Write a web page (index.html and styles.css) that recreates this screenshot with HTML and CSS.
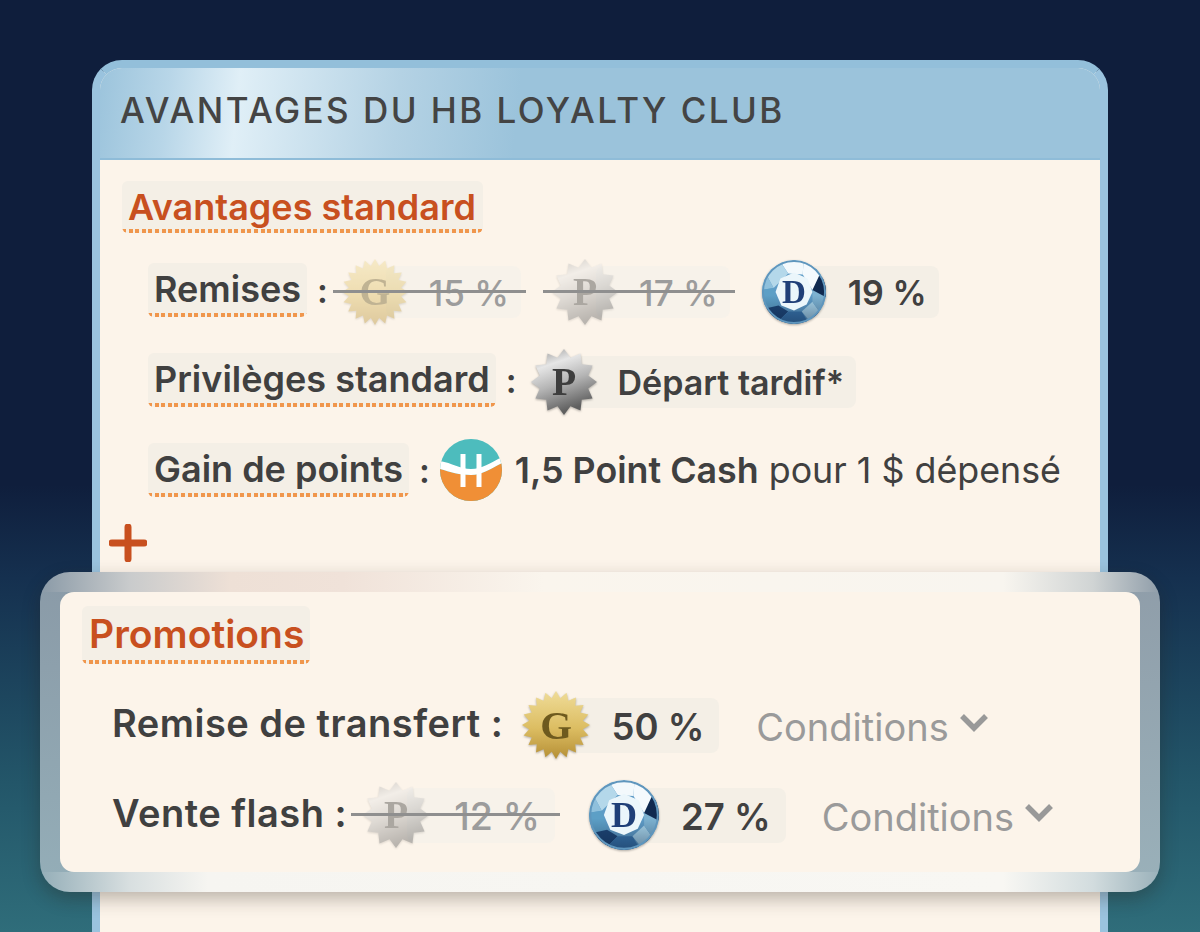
FILE: index.html
```
<!DOCTYPE html>
<html lang="fr">
<head>
<meta charset="utf-8">
<title>Avantages du HB Loyalty Club</title>
<link rel="stylesheet" href="styles.css">
</head>
<body>
<svg class="defs" width="0" height="0" aria-hidden="true">
  <defs>
    <linearGradient id="gold" x1="0" y1="0" x2="0" y2="1"><stop offset="0" stop-color="#efdc98"/><stop offset=".55" stop-color="#dcbd62"/><stop offset="1" stop-color="#b58f35"/></linearGradient>
    <linearGradient id="silver" x1="0" y1="0" x2="0.35" y2="1"><stop offset="0" stop-color="#8d8d8d"/><stop offset=".3" stop-color="#e6e6e6"/><stop offset=".6" stop-color="#b5b5b5"/><stop offset="1" stop-color="#5f5f5f"/></linearGradient>
    <linearGradient id="gem-shade" x1="0" y1="0" x2="0" y2="1"><stop offset=".55" stop-color="#0a1e3c" stop-opacity="0"/><stop offset="1" stop-color="#0a1e3c" stop-opacity=".45"/></linearGradient>
    <clipPath id="gem-clip"><circle cx="34" cy="34" r="33"/></clipPath>
    <clipPath id="h-clip"><circle cx="31" cy="31" r="31"/></clipPath>
    <polygon id="seal-gold" fill="url(#gold)" points="50,0 39.5,6.3 47.6,15.5 35.6,18.2 40.5,29.4 28.3,28.3 29.4,40.5 18.2,35.6 15.5,47.6 6.3,39.5 0,50 -6.3,39.5 -15.5,47.6 -18.2,35.6 -29.4,40.5 -28.3,28.3 -40.5,29.4 -35.6,18.2 -47.6,15.5 -39.5,6.3 -50,0 -39.5,-6.3 -47.6,-15.5 -35.6,-18.2 -40.5,-29.4 -28.3,-28.3 -29.4,-40.5 -18.2,-35.6 -15.5,-47.6 -6.3,-39.5 0,-50 6.3,-39.5 15.5,-47.6 18.2,-35.6 29.4,-40.5 28.3,-28.3 40.5,-29.4 35.6,-18.2 47.6,-15.5 39.5,-6.3"/>
    <polygon id="seal-silver" fill="url(#silver)" points="50,0 36.7,9.8 43.3,25 26.9,26.9 25,43.3 9.8,36.7 0,50 -9.8,36.7 -25,43.3 -26.9,26.9 -43.3,25 -36.7,9.8 -50,0 -36.7,-9.8 -43.3,-25 -26.9,-26.9 -25,-43.3 -9.8,-36.7 0,-50 9.8,-36.7 25,-43.3 26.9,-26.9 43.3,-25 36.7,-9.8"/>
    <g id="gem" clip-path="url(#gem-clip)">
      <circle cx="34" cy="34" r="33" fill="#5f9cc7"/>
      <polygon points="26,0 44,0 43,16 28,15 22,6" fill="#f3f9fc"/>
      <polygon points="44,0 68,22 53,32 43,16" fill="#f5fafd"/>
      <polygon points="0,6 22,6 28,15 13,30" fill="#b4d8ea"/>
      <polygon points="22,6 26,0 0,0 0,6" fill="#a6cfe4"/>
      <polygon points="0,32 0,6 13,30" fill="#8fc0dc"/>
      <polygon points="0,32 13,30 18,48 0,52" fill="#5d9fc6"/>
      <polygon points="0,52 18,48 28,54 14,68 0,68" fill="#1d4474"/>
      <polygon points="28,54 42,54 50,68 14,68" fill="#3a76ad"/>
      <polygon points="42,54 53,44 60,54 50,64" fill="#a9d5ea"/>
      <polygon points="50,68 50,64 60,54 68,58 68,68" fill="#1f4a7d"/>
      <polygon points="53,32 68,34 68,58 60,54 53,44" fill="#7db2d1"/>
      <polygon points="60,17 68,22 68,40 53,32" fill="#10294f"/>
      <circle cx="34" cy="34" r="33" fill="url(#gem-shade)"/>
      <circle cx="34" cy="34" r="32" fill="none" stroke="#5f96bd" stroke-width="2"/>
      <polygon points="34,14 48,20 53,34 47,47 34,53 21,48 15,34 20,20" fill="#ebf6fb"/>
    </g>
  </defs>
</svg>

<main class="card">
  <h1 class="card-head">AVANTAGES DU HB LOYALTY CLUB</h1>

  <section class="standard">
    <h2 class="tag tag-title">Avantages standard</h2>

    <div class="row row-std">
      <span class="tag tag-label">Remises</span><span class="colon">:</span>
      <div class="offer off">
        <svg class="seal" viewBox="-50 -50 100 100"><use href="#seal-gold"/><text class="seal-letter letter-gold" y="20">G</text></svg>
        <span class="value">15 %</span>
      </div>
      <div class="offer off">
        <svg class="seal" viewBox="-50 -50 100 100"><use href="#seal-silver"/><text class="seal-letter letter-silver" y="20">P</text></svg>
        <span class="value">17 %</span>
      </div>
      <div class="offer">
        <svg class="seal" viewBox="0 0 68 68"><use href="#gem"/><text class="gem-letter" x="34" y="45">D</text></svg>
        <span class="value">19 %</span>
      </div>
    </div>

    <div class="row row-std">
      <span class="tag tag-label">Privilèges standard</span><span class="colon">:</span>
      <div class="offer">
        <svg class="seal" viewBox="-50 -50 100 100"><use href="#seal-silver"/><text class="seal-letter letter-silver" y="20">P</text></svg>
        <span class="value">Départ tardif*</span>
      </div>
    </div>

    <div class="row row-std">
      <span class="tag tag-label">Gain de points</span><span class="colon colon-tight">:</span>
      <svg class="hlogo" viewBox="0 0 62 62">
        <g clip-path="url(#h-clip)">
          <rect width="62" height="62" fill="#4dbcbd"/>
          <path d="M0 30C10 33 20 36 31 36S50 30 62 24V62H0z" fill="#f08f36"/>
          <path d="M0 22C12 24 20 30 31 30S50 24 62 18V24C50 30 42 36 31 36S10 33 0 30z" fill="#fff"/>
          <path d="M23 15v33M39 15v33" fill="none" stroke="#fff" stroke-width="5"/>
        </g>
      </svg>
      <span class="points"><b>1,5 Point Cash</b> pour 1 $ dépensé</span>
    </div>

    <svg class="plus" viewBox="0 0 38 38"><path d="M19 3v32M3 19h32" stroke="#c8501f" stroke-width="7" stroke-linecap="round"/></svg>
  </section>

  <section class="promo">
    <div class="promo-inner">
      <h2 class="tag tag-title tag-promo">Promotions</h2>

      <div class="row row-promo">
        <span class="promo-label">Remise de transfert :</span>
        <div class="offer offer-g">
          <svg class="seal" viewBox="-50 -50 100 100"><use href="#seal-gold"/><text class="seal-letter letter-gold" y="20">G</text></svg>
          <span class="value">50 %</span>
        </div>
        <span class="cond">Conditions<svg class="chev" viewBox="0 0 30 20"><path d="M3 4l12 12L27 4" fill="none" stroke="#999" stroke-width="5.5"/></svg></span>
      </div>

      <div class="row row-promo">
        <span class="promo-label">Vente flash :</span>
        <div class="offer off offer-flash">
          <svg class="seal" viewBox="-50 -50 100 100"><use href="#seal-silver"/><text class="seal-letter letter-silver" y="20">P</text></svg>
          <span class="value">12 %</span>
        </div>
        <div class="offer offer-gem">
          <svg class="seal seal-big" viewBox="0 0 68 68"><use href="#gem"/><text class="gem-letter" x="34" y="45">D</text></svg>
          <span class="value">27 %</span>
        </div>
        <span class="cond">Conditions<svg class="chev" viewBox="0 0 30 20"><path d="M3 4l12 12L27 4" fill="none" stroke="#999" stroke-width="5.5"/></svg></span>
      </div>
    </div>
  </section>
</main>
</body>
</html>
```

FILE: styles.css
```
* { box-sizing: border-box; }

html, body { margin: 0; height: 932px; overflow: hidden; }

body {
  padding: 60px 92px 0;
  font-family: Inter, "Noto Sans", "Liberation Sans", sans-serif;
  color: #404040;
  background: linear-gradient(#0f1e3c 0, #0f1e3c 52%, #15304f 62%, #235669 84%, #2f6d7a 100%);
}

.defs { position: absolute; }

.card {
  height: 872px;
  border: 8px solid #9ac3de;
  border-top-color: #93bfda;
  border-bottom: 0;
  border-radius: 30px 30px 0 0;
  background: #fcf4ea;
}

.card-head {
  margin: 0;
  height: 92px;
  padding: 19px 0 0 20px;
  font-size: 35px;
  line-height: 46px;
  font-weight: 500;
  letter-spacing: 2.45px;
  color: #444;
  border-radius: 22px 22px 0 0;
  border-bottom: 2px solid #8fbcd8;
  background: linear-gradient(96deg, #9cc4dc 0, #b8d6e8 70px, #e0eff7 140px, #b4d2e4 300px, #9bc3db 420px, #9bc3db 100%);
}

.standard {
  height: 412px;
  padding: 21px 0 0 22px;
}

.tag {
  display: inline-block;
  margin: 0;
  border-radius: 6px;
  background-color: #f4efe6;
  background-image: repeating-linear-gradient(90deg, #f0964c 0 4px, transparent 4px 6.6px);
  background-size: 100% 4px;
  background-repeat: no-repeat;
  background-position: 0 100%;
}

.tag-title {
  height: 52px;
  padding: 0 7px 0 6px;
  font-size: 36px;
  line-height: 52px;
  font-weight: 600;
  color: #c8501f;
}

.tag-label {
  height: 54px;
  padding: 0 6px;
  font-size: 36px;
  line-height: 53px;
  font-weight: 600;
  white-space: nowrap;
}

.row {
  display: flex;
  align-items: center;
}

.row-std {
  height: 54px;
  margin: 36px 0 0 26px;
}

.tag-title + .row-std { margin-top: 30px; }

.colon {
  margin: 0 14px 0 10px;
  font-size: 34px;
  font-weight: 600;
}

.colon-tight { margin-right: 10px; }

.offer {
  position: relative;
  display: flex;
  align-items: center;
  margin-top: 4px;
  margin-right: 31px;
}

.seal {
  position: relative;
  z-index: 1;
  flex: none;
  width: 66px;
  height: 66px;
  filter: drop-shadow(0 1px 1px rgba(0,0,0,.3));
}

.seal-big { width: 72px; height: 72px; }

.value {
  height: 52px;
  margin-left: -22px;
  padding: 0 12px 0 43px;
  border-radius: 8px;
  background: #f4efe6;
  font-size: 34px;
  line-height: 54px;
  font-weight: 600;
  white-space: nowrap;
}

.seal-letter {
  font-family: "Liberation Serif", serif;
  font-size: 60px;
  font-weight: 700;
  text-anchor: middle;
}

.letter-gold { fill: #6e5a1e; }
.letter-silver { fill: #3e3e3e; }

.gem-letter {
  font-family: "Liberation Serif", serif;
  font-size: 34px;
  font-weight: 700;
  text-anchor: middle;
  fill: #1f3f78;
}

.off .seal { opacity: .42; }
.off .value { color: #9c9c9c; background: #f7f2ea; font-weight: 500; font-size: 35px; }

.off::after {
  content: "";
  position: absolute;
  z-index: 2;
  left: -9px;
  right: -5px;
  top: 50%;
  height: 3px;
  margin-top: -2px;
  background: #8f8f8f;
}

.hlogo {
  flex: none;
  width: 62px;
  height: 62px;
  margin-right: 13px;
}

.points {
  font-size: 35.8px;
  font-weight: 400;
  white-space: nowrap;
}

.points b { font-weight: 600; }

.plus {
  display: block;
  width: 38px;
  height: 38px;
  margin: 27px 0 0 -13px;
}

.promo {
  margin: 0 -60px;
  height: 320px;
  padding: 20px;
  border-radius: 30px;
  box-shadow: 0 7px 18px rgba(40,30,20,.3);
  background-image:
    linear-gradient(90deg, #8a9aa7 0, #c9cbcc 8%, #eee0d6 17%, #f0e2d9 27%, #faf5ed 45%, #f8f5ef 86%, #d0d4d4 94%, #8f9da9 100%),
    linear-gradient(90deg, #94aeb8 0, #d8dfe0 8%, #f6f5f1 15%, #f8f7f3 86%, #d2dcde 94%, #9ab1ba 100%),
    linear-gradient(#8a9aa7, #94aeb8),
    linear-gradient(#8f9da9, #9ab1ba);
  background-size: 100% 20px, 100% 20px, 36px 100%, 36px 100%;
  background-position: 0 0, 0 100%, 0 0, 100% 0;
  background-repeat: no-repeat;
}

.promo-inner {
  height: 280px;
  padding: 14px 0 0 22px;
  border-radius: 14px;
  background: #fcf4ea;
}

.tag-promo {
  display: block;
  width: 228px;
  height: 58px;
  padding-left: 7px;
  font-size: 39px;
  line-height: 56px;
}

.row-promo {
  height: 60px;
  margin: 31px 0 0 30px;
}

.row-promo + .row-promo { margin-top: 30px; }

.row-promo .offer { margin-top: 0; }

.row-promo .value {
  height: 55px;
  font-size: 36.5px;
  line-height: 58px;
  padding-right: 15px;
}

.row-promo .off .value {
  font-size: 37.5px;
  padding-left: 47px;
}

.promo-label {
  margin-right: 19px;
  margin-bottom: 4px;
  font-size: 38px;
  font-weight: 600;
  letter-spacing: .5px;
  white-space: nowrap;
}

.offer-g .seal { width: 68px; height: 68px; }
.offer-g { margin-right: 37px; }
.offer-flash { margin-left: -3px; margin-right: 33px; }
.offer-flash::after { left: -12px; }
.offer-gem { margin-right: 36px; }

.cond {
  display: flex;
  align-items: center;
  margin-top: 4px;
  font-size: 38px;
  color: #9a9a9a;
  white-space: nowrap;
}

.chev {
  width: 30px;
  height: 20px;
  margin: -10px 0 0 10px;
}
```
